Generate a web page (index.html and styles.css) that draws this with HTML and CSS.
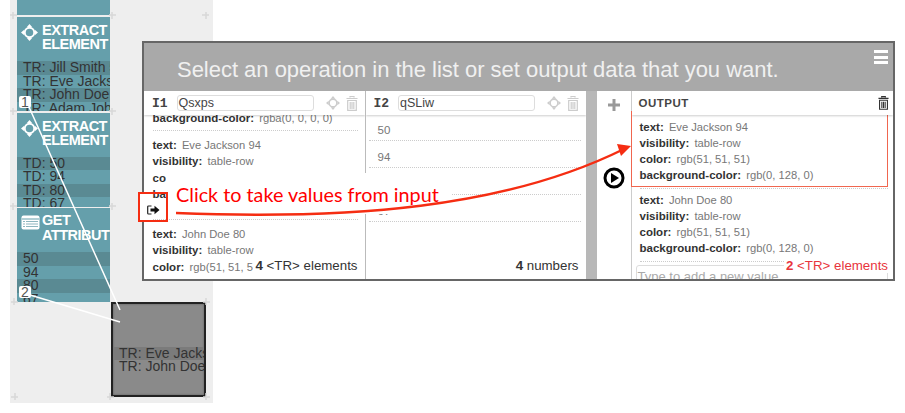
FILE: index.html

```html
<!DOCTYPE html>
<html lang="en">
<head>
    <meta charset="UTF-8">
    <title>Select an operation</title>
    <link rel="stylesheet" href="styles.css">
</head>
<body>
    <svg class="defs" width="0" height="0">
        <symbol id="move" viewBox="0 0 18 18">
            <circle cx="9" cy="9" r="5" fill="none" stroke="currentColor" stroke-width="2"/>
            <path d="M9 0l3 3.400H6zM9 18l3-3.400H6zM0 9l3.400-3v6zM18 9l-3.400-3v6z" fill="currentColor"/>
        </symbol>
        <symbol id="trash" viewBox="0 0 12 15">
            <path d="M4 1.500V.5h4v1M.5 2.500h11M1.700 4.500h8.600V14.300H1.700zM4.200 6v7M6 6v7M7.800 6v7" fill="none" stroke="currentColor" stroke-width="1.200"/>
        </symbol>
    </svg>

    <div class="canvas">
        <div class="column">
            <div class="node node-stub"></div>
            <div class="node">
                <div class="node-title">
                    <svg class="node-icon"><use href="#move"/></svg>
                    <span>EXTRACT<br>ELEMENT</span>
                </div>
                <div class="node-row">TR: Jill Smith 50</div>
                <div class="node-row">TR: Eve Jackson 94</div>
                <div class="node-row">TR: John Doe 80</div>
                <div class="node-row">TR: Adam Johnson 67</div>
            </div>
            <div class="node">
                <div class="node-title">
                    <svg class="node-icon"><use href="#move"/></svg>
                    <span>EXTRACT<br>ELEMENT</span>
                </div>
                <div class="node-row">TD: 50</div>
                <div class="node-row">TD: 94</div>
                <div class="node-row">TD: 80</div>
                <div class="node-row">TD: 67</div>
            </div>
            <div class="node">
                <div class="node-title node-title-get">
                    <svg class="node-icon node-icon-table" viewBox="0 0 19 15">
                        <rect x="0.500" y="0.500" width="18" height="14" rx="2" fill="#fff"/>
                        <path d="M1 4h17" stroke="#659fab"/>
                        <path d="M5 6.500h12M5 9h12M5 11.500h12M2 6.500h2M2 9h2M2 11.500h2" stroke="#8fb7c0"/>
                    </svg>
                    <span>GET<br>ATTRIBUTE</span>
                </div>
                <div class="node-row">50</div>
                <div class="node-row">94</div>
                <div class="node-row">80</div>
                <div class="node-row">67</div>
            </div>
        </div>

        <div class="result-box">
            <div class="result-row result-row-dark">TR: Eve Jackson 94</div>
            <div class="result-row">TR: John Doe 80</div>
        </div>

        <svg class="wires" width="213" height="403">
            <path d="M29 107L120 310M30 295L120 322" fill="none" stroke="#fff" stroke-width="1.500"/>
            <path class="plus" d="M13 12v7M10 15h7M112 12v7M109 15h7M206 12v7M202 15h7M13 108v7M10 111h7M112 108v7M109 111h7M13 203v7M10 206h7M112 203v7M109 206h7M14 298v7M11 302h7M206 298v7M203 302h7M15 393v7M11 397h7M110 393v7M107 397h7M206 393v7M203 397h7"/>
        </svg>
        <span class="badge badge-one">1</span>
        <span class="badge badge-two">2</span>
    </div>

    <div class="dialog">
        <div class="dialog-head">
            <h1>Select an operation in the list or set output data that you want.</h1>
            <div class="burger"><i></i><i></i><i></i></div>
        </div>
        <div class="dialog-body">
            <section class="panel panel-first">
                <div class="panel-head">
                    <b class="input-id">I1</b>
                    <div class="name-input">Qsxps</div>
                    <svg class="tool tool-move"><use href="#move"/></svg>
                    <svg class="tool tool-trash"><use href="#trash"/></svg>
                </div>
                <div class="list list-scrolled">
                    <div class="entry entry-cut">
                        <p><b>background-color:</b> rgba(0, 0, 0, 0)</p>
                    </div>
                    <div class="entry entry-tall">
                        <p><b>text:</b> Eve Jackson 94</p>
                        <p><b>visibility:</b> table-row</p>
                        <p><b>color:</b> rgb(51, 51, 51)</p>
                        <p><b>background-color:</b> rgb(0, 128, 0)</p>
                    </div>
                    <div class="entry">
                        <p><b>text:</b> John Doe 80</p>
                        <p><b>visibility:</b> table-row</p>
                        <p><b>color:</b> rgb(51, 51, 51)</p>
                    </div>
                </div>
                <div class="count"><b>4</b> &lt;TR&gt; elements</div>
            </section>

            <section class="panel panel-second">
                <div class="panel-head">
                    <b class="input-id">I2</b>
                    <div class="name-input">qSLiw</div>
                    <svg class="tool tool-move"><use href="#move"/></svg>
                    <svg class="tool tool-trash"><use href="#trash"/></svg>
                </div>
                <div class="list">
                    <div class="number">50</div>
                    <div class="number">94</div>
                    <div class="number">80</div>
                    <div class="number">67</div>
                </div>
                <div class="count"><b>4</b> numbers</div>
            </section>

            <div class="splitter"></div>

            <div class="actions">
                <svg class="add" width="12" height="12"><path d="M6 0v12M0 6h12" stroke="#999" stroke-width="3"/></svg>
                <svg class="play" width="22" height="22">
                    <circle cx="11" cy="11" r="9" fill="#fff" stroke="#000" stroke-width="3"/>
                    <path d="M8 6l8 5-8 5z" fill="#000"/>
                </svg>
            </div>

            <section class="panel panel-output">
                <div class="panel-head">
                    <b class="output-title">OUTPUT</b>
                    <svg class="tool-dark"><use href="#trash"/></svg>
                </div>
                <div class="list list-output">
                    <div class="entry">
                        <p><b>text:</b> Eve Jackson 94</p>
                        <p><b>visibility:</b> table-row</p>
                        <p><b>color:</b> rgb(51, 51, 51)</p>
                        <p><b>background-color:</b> rgb(0, 128, 0)</p>
                    </div>
                    <div class="entry">
                        <p><b>text:</b> John Doe 80</p>
                        <p><b>visibility:</b> table-row</p>
                        <p><b>color:</b> rgb(51, 51, 51)</p>
                        <p><b>background-color:</b> rgb(0, 128, 0)</p>
                    </div>
                    <div class="new-value">Type to add a new value</div>
                </div>
                <div class="count count-red"><b>2</b> &lt;TR&gt; elements</div>
            </section>
        </div>
    </div>

    <div class="picked-box"></div>
    <div class="callout-mask"></div>
    <div class="callout-box">
        <svg width="13" height="10" viewBox="0 0 13 10">
            <path d="M4.500 1H1.500A.8.800 0 0 0 .7 1.800v6.400a.8.800 0 0 0 .8.800h3" fill="none" stroke="#222" stroke-width="1.200"/>
            <path d="M3.500 3.500H7.500V.8L12.500 5 7.500 9.200V6.500H3.500z" fill="#111"/>
        </svg>
    </div>
    <div class="callout-text">Click to take values from input</div>
    <svg class="callout-arrow" width="905" height="413">
        <path d="M176 213C350 220 505 208 624 149" fill="none" stroke="#f52d12" stroke-width="2.500"/>
        <path d="M631 146L617 144L621 156z" fill="#f52d12"/>
    </svg>
</body>
</html>
```

FILE: styles.css

```css
body {
    margin: 0;
    width: 905px;
    height: 413px;
    position: relative;
    overflow: hidden;
    background-color: #fff;
    font-family: "Liberation Sans", Arial, sans-serif;
    color: #333;
}
.defs {
    position: absolute;
}

/* workspace on the left */
.canvas {
    position: absolute;
    left: 10px;
    top: 0;
    width: 203px;
    height: 403px;
    background-color: #eee;
}
.column {
    position: absolute;
    left: 7px;
    top: 0;
    width: 93px;
    display: flex;
    flex-direction: column;
}
.node {
    height: 94px;
    margin-bottom: 1.500px;
    background-color: #659fab;
    overflow: hidden;
    white-space: nowrap;
    font-size: 14px;
    color: #333;
}
.node-stub {
    height: 15px;
    margin-bottom: 2px;
}
.node-title {
    height: 44px;
    display: flex;
    gap: 4px;
    padding: 6px 0 0 4px;
    box-sizing: border-box;
    color: #fff;
    font-size: 14.500px;
    line-height: 14px;
    font-weight: bold;
    letter-spacing: -0.500px;
}
.node-title-get {
    gap: 2px;
    padding-top: 5px;
    line-height: 15px;
}
.node-icon {
    width: 17px;
    height: 17px;
    margin-top: 1px;
    flex: none;
    color: #fff;
}
.node-icon-table {
    width: 19px;
    height: 15px;
    margin-top: 2px;
}
.node-row {
    height: 13.500px;
    line-height: 13.500px;
    padding-left: 6px;
}
.node-row:nth-child(even) {
    background-color: #5a8a93;
}
.result-box {
    position: absolute;
    left: 101px;
    top: 302px;
    width: 95px;
    height: 95px;
    box-sizing: border-box;
    padding-top: 43px;
    border: 2px solid #222;
    background-color: #8a8a8a;
    box-shadow: inset 0 0 2px #555;
    overflow: hidden;
    white-space: nowrap;
    font-size: 14px;
    color: #333;
}
.result-row {
    height: 13px;
    line-height: 13px;
    padding-left: 6px;
}
.result-row-dark {
    background-color: #7b7b7b;
}
.wires {
    position: absolute;
    left: -10px;
    top: 0;
}
.plus {
    stroke: #d8d8d8;
    stroke-width: 1.500;
    fill: none;
}
.badge {
    position: absolute;
    left: 9px;
    width: 12px;
    height: 12px;
    background-color: #fff;
    border-radius: 2px;
    text-align: center;
    font-size: 14px;
    line-height: 12px;
    color: #555;
}
.badge-one {
    top: 96px;
}
.badge-two {
    top: 286px;
}

/* dialog */
.dialog {
    position: absolute;
    left: 142px;
    top: 41px;
    width: 753px;
    height: 240px;
    box-sizing: border-box;
    border: 2px solid #666;
    background-color: #fff;
    display: flex;
    flex-direction: column;
}
.dialog-head {
    height: 48px;
    flex: none;
    position: relative;
    background-color: #a9a9a9;
}
.dialog-head h1 {
    margin: 0;
    padding: 13px 0 0 33px;
    font-size: 22px;
    line-height: 27px;
    font-weight: normal;
    letter-spacing: -0.020px;
    color: #f0f0f0;
    white-space: nowrap;
}
.burger {
    position: absolute;
    top: 7px;
    right: 5px;
    width: 14px;
    display: flex;
    flex-direction: column;
    gap: 2.500px;
}
.burger i {
    display: block;
    height: 3px;
    background-color: #fff;
}
.dialog-body {
    flex: 1;
    display: flex;
    min-height: 0;
}
.panel {
    position: relative;
    display: flex;
    flex-direction: column;
    overflow: hidden;
}
.panel-first {
    width: 220.500px;
    border-right: 1.500px solid #bbb;
}
.panel-second {
    width: 220px;
}
.panel-output {
    flex: 1;
    border-left: 1px solid #ccc;
}
.panel-head {
    height: 24px;
    flex: none;
    display: flex;
    align-items: center;
    position: relative;
    z-index: 1;
    background-color: #fff;
    box-shadow: 0 1px 2px rgba(0, 0, 0, 0.2);
}
.input-id {
    width: 24.500px;
    margin-left: 8px;
    font-family: "Liberation Mono", monospace;
    font-size: 13px;
    color: #444;
}
.name-input {
    width: 137px;
    height: 16px;
    box-sizing: border-box;
    padding-left: 1px;
    border: 1px solid #ddd;
    border-radius: 3px;
    font-size: 12.500px;
    line-height: 14px;
    color: #444;
}
.tool {
    color: #ccc;
}
.tool-move {
    width: 14px;
    height: 14px;
    margin-left: 12px;
}
.tool-trash {
    width: 12px;
    height: 15px;
    margin-left: 6px;
}
.tool-dark {
    width: 11px;
    height: 14px;
    margin-left: auto;
    margin-right: 4px;
    color: #333;
}
.output-title {
    margin-left: 7px;
    font-size: 11.500px;
    letter-spacing: 0.500px;
    color: #444;
}
.list {
    flex: 1;
    min-height: 0;
    font-size: 11.200px;
    color: #777;
}
.list-scrolled {
    margin-top: -5px;
    padding-left: 8.500px;
    padding-right: 7px;
}
.list-output {
    padding: 4px 5px 0 8px;
}
.list p {
    margin: 0;
    height: 16.500px;
    line-height: 16.500px;
    white-space: nowrap;
}
.list-output p {
    height: 16px;
    line-height: 16px;
}
.list b {
    font-size: 11.500px;
    color: #333;
    margin-right: 2px;
}
.entry {
    padding-bottom: 5px;
    margin-bottom: 6px;
    border-bottom: 1px dotted #ccc;
}
.entry-cut {
    padding-bottom: 3px;
    margin-bottom: 6px;
}
.entry-tall {
    padding-bottom: 16px;
}
.list-output .entry {
    margin-bottom: 3px;
}
.number {
    height: 25px;
    margin: 0 5px 1px 3px;
    padding-left: 9px;
    border-bottom: 1px dotted #ccc;
    line-height: 30px;
    font-size: 11.500px;
}
.new-value {
    height: 20px;
    margin: 1px 0 0 -4px;
    padding: 2px 0 0 1px;
    box-sizing: border-box;
    border: 1px solid #ddd;
    border-radius: 3px;
    font-size: 13px;
    line-height: 17px;
    white-space: nowrap;
    color: #aaa;
}
.count {
    position: absolute;
    right: 7px;
    bottom: 6px;
    padding-left: 2px;
    background-color: #fff;
    font-size: 13.300px;
    line-height: 15px;
    color: #333;
}
.count-red {
    right: 5px;
    color: #e8343c;
}
.splitter {
    width: 11px;
    flex: none;
    background-color: #b8b8b8;
}
.actions {
    width: 34px;
    flex: none;
    display: flex;
    flex-direction: column;
    align-items: center;
    padding-left: 1px;
    box-sizing: border-box;
}
.add {
    margin-top: 8px;
}
.play {
    margin-top: 56px;
}

/* annotation drawn on top of the screenshot */
.picked-box {
    position: absolute;
    left: 631px;
    top: 111px;
    width: 257px;
    height: 76px;
    box-sizing: border-box;
    border: 1.500px solid #f0664f;
}
.callout-mask {
    position: absolute;
    left: 166px;
    top: 173px;
    width: 285px;
    height: 41px;
    background-color: #fff;
}
.callout-box {
    position: absolute;
    left: 138px;
    top: 192px;
    width: 30px;
    height: 30px;
    box-sizing: border-box;
    padding: 11px 0 0 7px;
    border: 2px solid #f52d12;
    background: linear-gradient(to right, #fff 6px, transparent 6px);
}
.callout-box svg {
    display: block;
}
.callout-text {
    position: absolute;
    left: 176px;
    top: 181px;
    font-family: Lato, sans-serif;
    font-size: 19.800px;
    line-height: 26px;
    color: #f00;
    white-space: nowrap;
}
.callout-arrow {
    position: absolute;
    left: 0;
    top: 0;
}
```
